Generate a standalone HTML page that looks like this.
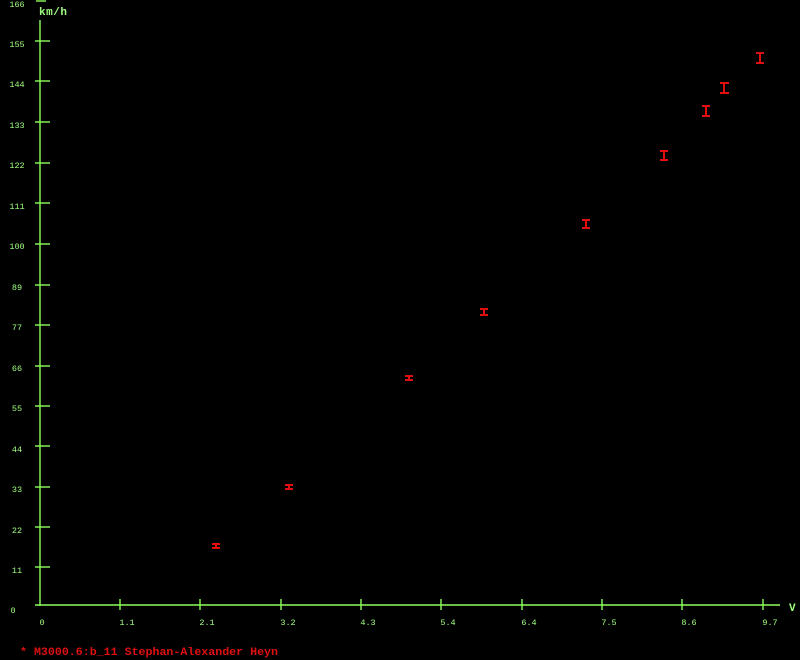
<!DOCTYPE html>
<html><head><style>body{margin:0;background:#000}svg{display:block}text{font-family:"Liberation Mono",monospace}</style></head><body>
<svg width="800" height="660" xmlns="http://www.w3.org/2000/svg">
<rect width="800" height="660" fill="#000"/>
<g stroke="#8cff5a" stroke-width="1.4" fill="none">
<line x1="40" y1="20" x2="40" y2="606"/>
<line x1="35" y1="605" x2="780" y2="605"/>
<line x1="36" y1="1" x2="46" y2="1"/>
<line x1="35" y1="41" x2="50" y2="41"/><line x1="35" y1="81" x2="50" y2="81"/><line x1="35" y1="122" x2="50" y2="122"/><line x1="35" y1="163" x2="50" y2="163"/><line x1="35" y1="203" x2="50" y2="203"/><line x1="35" y1="244" x2="50" y2="244"/><line x1="35" y1="285" x2="50" y2="285"/><line x1="35" y1="325" x2="50" y2="325"/><line x1="35" y1="366" x2="50" y2="366"/><line x1="35" y1="406" x2="50" y2="406"/><line x1="35" y1="446" x2="50" y2="446"/><line x1="35" y1="487" x2="50" y2="487"/><line x1="35" y1="527" x2="50" y2="527"/><line x1="35" y1="567" x2="50" y2="567"/>
<line x1="120" y1="599" x2="120" y2="610"/><line x1="200" y1="599" x2="200" y2="610"/><line x1="281" y1="599" x2="281" y2="610"/><line x1="361" y1="599" x2="361" y2="610"/><line x1="441" y1="599" x2="441" y2="610"/><line x1="522" y1="599" x2="522" y2="610"/><line x1="602" y1="599" x2="602" y2="610"/><line x1="682" y1="599" x2="682" y2="610"/><line x1="763" y1="599" x2="763" y2="610"/>
</g>
<g fill="#a0ff80" font-size="8.5" text-anchor="middle">
<text x="17" y="7">166</text><text x="17" y="47">155</text><text x="17" y="87">144</text><text x="17" y="128">133</text><text x="17" y="168">122</text><text x="17" y="209">111</text><text x="17" y="249">100</text><text x="17" y="290">89</text><text x="17" y="330">77</text><text x="17" y="371">66</text><text x="17" y="411">55</text><text x="17" y="452">44</text><text x="17" y="492">33</text><text x="17" y="533">22</text><text x="17" y="573">11</text><text x="13" y="613">0</text>
<text x="42" y="625">0</text><text x="127" y="625">1.1</text><text x="207" y="625">2.1</text><text x="288" y="625">3.2</text><text x="368" y="625">4.3</text><text x="448" y="625">5.4</text><text x="529" y="625">6.4</text><text x="609" y="625">7.5</text><text x="689" y="625">8.6</text><text x="770" y="625">9.7</text>
</g>
<text x="39" y="15" fill="#a0ff80" font-size="11" font-weight="bold" textLength="28">km/h</text>
<text x="789" y="611" fill="#a0ff80" font-size="11" font-weight="bold">V</text>
<g stroke="#e01010" stroke-width="2" fill="none">
<path d="M212 544h8M212 548h8M216 544v4"/>
<path d="M285 485h8M285 489h8M289 485v4"/>
<path d="M405 376h8M405 380h8M409 376v4"/>
<path d="M480 309h8M480 315h8M484 309v6"/>
<path d="M582 220h8M582 228h8M586 220v8"/>
<path d="M660 151h8M660 160h8M664 151v9"/>
<path d="M702 106h8M702 116h8M706 106v10"/>
<path d="M720 83h9M720 93h9M724 83v10"/>
<path d="M756 53h8M756 63h8M760 53v10"/>
</g>
<text x="20" y="655" fill="#e01010" font-size="11" font-weight="bold" textLength="258" lengthAdjust="spacingAndGlyphs">* M3000.6:b_11 Stephan-Alexander Heyn</text>
</svg>
</body></html>
